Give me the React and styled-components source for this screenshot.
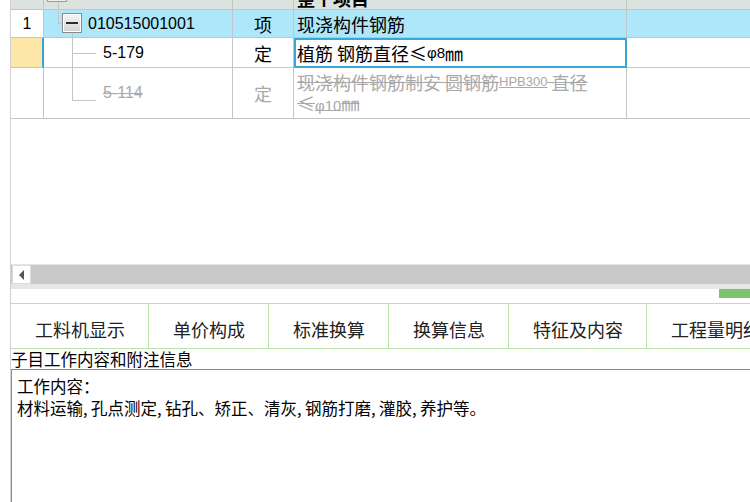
import React from "react";
import styled, { createGlobalStyle } from "styled-components";

const GlobalStyle = createGlobalStyle`
  html, body { margin: 0; padding: 0; background: #fff; overflow: hidden; }
  body { width: 750px; height: 502px; font-family: "Noto Sans CJK SC", sans-serif; color: #000; }
  #root { width: 750px; height: 502px; overflow: hidden; }
`;

const Page = styled.div`
  margin-left: 10px;
  width: 739px;
  height: 502px;
  border-left: 1px solid #d2d2d2;
  display: flex;
  flex-direction: column;
`;

const GridArea = styled.div`
  height: 264px;
  flex: none;
  overflow: hidden;
`;

const Grid = styled.div`
  display: grid;
  grid-template-columns: 33px 189px 61px 333px 200px;
  grid-template-rows: 24px 28px 30px 51px;
  margin-top: -14px;
  font-size: 18px;
  line-height: 22px;
`;

const Cell = styled.div`
  box-sizing: border-box;
  display: flex;
  align-items: center;
  justify-content: ${(p) => (p.$center ? "center" : "flex-start")};
  padding-left: ${(p) => (p.$pad ? "3px" : "0")};
  background: ${(p) => p.$bg || "#fff"};
  border-right: ${(p) => (p.$marker ? "2px solid #38a4da" : "1px solid #c4c4c4")};
  border-bottom: 1px solid #c4c4c4;
  color: ${(p) => (p.$dim ? "#a9a9a9" : "#000")};
  text-decoration: ${(p) => (p.$strike ? "line-through" : "none")};
  font-weight: ${(p) => (p.$bold ? 700 : 400)};
  outline: ${(p) => (p.$sel ? "2px solid #3aa6da" : "none")};
  outline-offset: -2px;
  white-space: nowrap;
`;

const TwoLines = styled.span`
  line-height: 21px;
`;

const Num = styled.span`
  font-family: "Liberation Sans", sans-serif;
  font-size: 16px;
`;

const Small = styled.span`
  font-family: "Liberation Sans", sans-serif;
  font-size: ${(p) => p.$size || 13}px;
  line-height: 1;
  vertical-align: ${(p) => p.$raise || 0}px;
`;

const Guide = styled.svg`
  display: block;
  flex: none;
`;

const HScroll = styled.div`
  height: 20px;
  flex: none;
  box-sizing: border-box;
  border-top: 1px solid #e4e4e4;
  background: #c9c9c9;
  display: flex;
`;

const ArrowBtn = styled.div`
  width: 19px;
  margin-left: 1px;
  background: #fff;
  border: 1px solid #dcdcdc;
  box-sizing: border-box;
  display: flex;
  align-items: center;
  justify-content: center;
`;

const Strip = styled.div`
  height: 5px;
  flex: none;
  background: #e6e6e6;
`;

const ThumbRow = styled.div`
  height: 14px;
  flex: none;
  display: flex;
  justify-content: flex-end;
`;

const Thumb = styled.div`
  width: 31px;
  height: 9px;
  background: #7cc46c;
`;

const TabBar = styled.div`
  height: 46px;
  flex: none;
  box-sizing: border-box;
  border-top: 1px solid #b8e4aa;
  border-bottom: 1px solid #b8e4aa;
  display: flex;
  overflow: hidden;
`;

const Tab = styled.div`
  flex: none;
  display: flex;
  align-items: center;
  padding: 5px 23px 0 24px;
  border-right: 1px solid #b8e4aa;
  font-size: 18px;
  line-height: 1;
  color: #222;
  white-space: nowrap;
`;

const Label = styled.div`
  height: 20px;
  flex: none;
  font-size: 16.5px;
  line-height: 20px;
  white-space: nowrap;
`;

const TextBox = styled.div`
  flex: 1;
  border-top: 1px solid #8c8c8c;
  border-left: 1px solid #8c8c8c;
  padding: 5px 0 0 5px;
  font-size: 16.5px;
  line-height: 22px;
  white-space: nowrap;
`;

const Comma = styled.span`
  display: inline-block;
  width: 8px;
`;

const line = { stroke: "#c4c4c4", strokeWidth: 1 };

function TreeGuide({ kind }) {
  if (kind === "header") {
    return (
      <Guide width="30" height="23" viewBox="0 0 30 23">
        <rect x="3.5" y="-3.5" width="19" height="19" fill="#f0f0f0" stroke="#9c9c9c" />
        <line x1="14.5" y1="16" x2="14.5" y2="23" {...line} />
      </Guide>
    );
  }
  if (kind === "parent") {
    return (
      <Guide width="44" height="27" viewBox="0 0 44 27">
        <defs>
          <linearGradient id="boxg" x1="0" y1="0" x2="0" y2="1">
            <stop offset="0" stopColor="#f6f6f6" />
            <stop offset="1" stopColor="#d2d2d2" />
          </linearGradient>
        </defs>
        <line x1="14.5" y1="0" x2="14.5" y2="13.5" {...line} />
        <line x1="14.5" y1="13.5" x2="18" y2="13.5" {...line} />
        <rect x="18.5" y="3.5" width="19" height="19" fill="url(#boxg)" stroke="#8a8a8a" />
        <rect x="19.5" y="4.5" width="17" height="17" fill="none" stroke="#fff" />
        <rect x="22" y="12" width="12" height="2" fill="#2a2a2a" />
        <line x1="28.5" y1="23" x2="28.5" y2="27" {...line} />
      </Guide>
    );
  }
  if (kind === "mid") {
    return (
      <Guide width="59" height="29" viewBox="0 0 59 29">
        <line x1="28.5" y1="0" x2="28.5" y2="29" {...line} />
        <line x1="28.5" y1="15.5" x2="52" y2="15.5" {...line} />
      </Guide>
    );
  }
  return (
    <Guide width="59" height="50" viewBox="0 0 59 50">
      <line x1="28.5" y1="0" x2="28.5" y2="32.5" {...line} />
      <line x1="28.5" y1="32.5" x2="52" y2="32.5" {...line} />
    </Guide>
  );
}

const tabs = ["工料机显示", "单价构成", "标准换算", "换算信息", "特征及内容", "工程量明细"];

export default function App() {
  return (
    <>
      <GlobalStyle />
      <Page>
        <GridArea>
          <Grid>
            {/* header */}
            <Cell $bg="#dce2dd" />
            <Cell $bg="#dce2dd">
              <TreeGuide kind="header" />
            </Cell>
            <Cell $bg="#dce2dd" />
            <Cell $bg="#dce2dd" $pad $bold>整个项目</Cell>
            <Cell $bg="#dce2dd" />

            {/* row 1 */}
            <Cell $center><Num>1</Num></Cell>
            <Cell $bg="#aee7f9">
              <TreeGuide kind="parent" />
              <Num>010515001001</Num>
            </Cell>
            <Cell $bg="#aee7f9" $center>项</Cell>
            <Cell $bg="#aee7f9" $pad>现浇构件钢筋</Cell>
            <Cell $bg="#aee7f9" />

            {/* row 2 */}
            <Cell $bg="#fde7a8" $marker />
            <Cell>
              <TreeGuide kind="mid" />
              <Num>5-179</Num>
            </Cell>
            <Cell $center>定</Cell>
            <Cell $pad $sel>
              植筋 钢筋直径≤<Small $size={15}>φ8</Small>㎜
            </Cell>
            <Cell />

            {/* row 3 */}
            <Cell />
            <Cell $dim $strike>
              <TreeGuide kind="last" />
              <Num>5-114</Num>
            </Cell>
            <Cell $center $dim>定</Cell>
            <Cell $pad $dim $strike>
              <TwoLines>
                现浇构件钢筋制安 圆钢筋<Small $raise={4}>HPB300</Small> 直径
                <br />
                ≤<Small $size={15}>φ10</Small>㎜
              </TwoLines>
            </Cell>
            <Cell />
          </Grid>
        </GridArea>

        <HScroll>
          <ArrowBtn>
            <svg width="6" height="10" viewBox="0 0 6 10">
              <path d="M5 0 L0 5 L5 10 Z" fill="#555" />
            </svg>
          </ArrowBtn>
        </HScroll>
        <Strip />
        <ThumbRow>
          <Thumb />
        </ThumbRow>

        <TabBar>
          {tabs.map((t) => (
            <Tab key={t}>{t}</Tab>
          ))}
        </TabBar>

        <Label>子目工作内容和附注信息</Label>

        <TextBox>
          工作内容：
          <br />
          材料运输<Comma>,</Comma>孔点测定<Comma>,</Comma>钻孔、矫正、清灰<Comma>,</Comma>钢筋打磨<Comma>,</Comma>灌胶<Comma>,</Comma>养护等。
        </TextBox>
      </Page>
    </>
  );
}
